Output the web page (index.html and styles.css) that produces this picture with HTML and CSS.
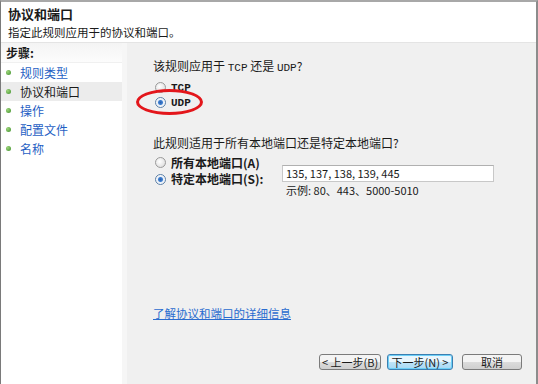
FILE: index.html
```html
<!doctype html>
<html>
  <head>
    <title>新建入站规则向导</title>
    <link rel="stylesheet" href="styles.css">
  </head>
  <body>
    <div id="wizard">
      <div id="head">
        <h1>协议和端口</h1>
        <p>指定此规则应用于的协议和端口。</p>
      </div>
      <div id="content">
        <div id="steps">
          <div class="steps-title">步骤:</div>
          <div class="step"><span class="dot"></span><a href="#">规则类型</a></div>
          <div class="step current"><span class="dot"></span>协议和端口</div>
          <div class="step"><span class="dot"></span><a href="#">操作</a></div>
          <div class="step"><span class="dot"></span><a href="#">配置文件</a></div>
          <div class="step"><span class="dot"></span><a href="#">名称</a></div>
        </div>
        <div id="main">
          <div class="question">该规则应用于 <span class="mono">TCP</span> 还是 <span class="mono">UDP</span>?</div>
          <div class="options">
            <div class="option"><span class="radio"></span><b class="mono">TCP</b></div>
            <div class="option marked"><span class="radio on"></span><b class="mono">UDP</b></div>
          </div>
          <div class="question second">此规则适用于所有本地端口还是特定本地端口?</div>
          <div class="options">
            <div class="option"><span class="radio"></span><b>所有本地端口(A)</b></div>
            <div class="option ports">
              <span class="radio on"></span><b class="port-label">特定本地端口(S):</b>
              <div class="port-field">
                <div class="port-input">135, 137, 138, 139, 445</div>
                <div class="example">示例: 80、443、5000-5010</div>
              </div>
            </div>
          </div>
          <div class="spacer"></div>
          <a href="#" class="more">了解协议和端口的详细信息</a>
          <div id="buttons">
            <div class="button">&lt; 上一步(B)</div>
            <div class="button default">下一步(N) &gt;</div>
            <div class="button cancel">取消</div>
          </div>
        </div>
      </div>
    </div>
  </body>
</html>
```

FILE: styles.css
```css
html, body {
  margin: 0;
  padding: 0;
}

body {
  font-family: "Noto Sans CJK SC", "Liberation Sans", sans-serif;
  font-size: 12px;
  color: #1a1a1a;
  background-color: #f0f0f0;
}

div#wizard {
  width: 535px;
  height: 382px;
  border-top: 2px solid #a8a8a8;
  border-left: 1px solid #7a7a7a;
  border-right: 2px solid #8c8c8c;
  display: flex;
  flex-direction: column;
}

div#head {
  background-color: #fff;
  height: 40px;
  padding-left: 7px;
  border-bottom: 1px solid #e4e4e4;
}

h1 {
  font-size: 13px;
  font-weight: bold;
  margin: 0;
  padding-top: 3px;
  line-height: 18px;
}

div#head p {
  margin: 0;
  padding-top: 1px;
  line-height: 16px;
  font-size: 11.5px;
}

div#content {
  flex: 1;
  display: flex;
}

div#steps {
  width: 121px;
  background-color: #fff;
  border-right: 5px solid #f6f6f6;
}

div.steps-title {
  font-weight: bold;
  height: 19px;
  line-height: 19px;
  padding-left: 5px;
  background: linear-gradient(#f4f4f4, #fcfcfc);
  border-bottom: 1px solid #f0f0f0;
}

div.step {
  height: 19px;
  line-height: 19px;
  display: flex;
  align-items: center;
}

div.step.current {
  background-color: #ececec;
}

span.dot {
  width: 5px;
  height: 5px;
  border-radius: 50%;
  background: radial-gradient(circle at 35% 35%, #9ed67a, #3c8d2a);
  margin-left: 5px;
  margin-right: 9px;
}

div.step a {
  color: #1f5fc4;
  text-decoration: none;
}

div#main {
  flex: 1;
  display: flex;
  flex-direction: column;
  padding: 15px 12px 14px 26px;
  position: relative;
}

.mono {
  font-family: "Liberation Mono", monospace;
  font-size: 11px;
}

div.question {
  line-height: 16px;
}

div.question.second {
  margin-top: 25px;
}

div.options {
  padding-left: 2px;
  margin-top: 4px;
}

div.option {
  display: flex;
  align-items: center;
  height: 15px;
  position: relative;
}

div.option b {
  margin-left: 5px;
}

div.option.marked::after {
  content: "";
  position: absolute;
  left: -19px;
  top: -6px;
  width: 61px;
  height: 20px;
  border: 3px solid #e3161b;
  border-radius: 50%;
}

div.option.ports {
  align-items: flex-start;
  margin-top: 1px;
}

span.radio {
  width: 9px;
  height: 9px;
  border-radius: 50%;
  border: 1px solid #9a9a9a;
  background: radial-gradient(circle at 40% 40%, #fff, #d6d6d6);
  flex: none;
}

div.ports span.radio {
  margin-top: 3px;
}

span.radio.on {
  border-color: #5b7fa6;
  background: radial-gradient(circle, #2a5fae 0, #3f7fd0 2px, #e8eef6 3px, #fff 5px);
}

b.port-label {
  width: 111px;
  line-height: 15px;
}

div.port-field {
  width: 212px;
}

div.port-input {
  background-color: #fff;
  border: 1px solid #c8c8c8;
  border-top-color: #b0b0b0;
  height: 15px;
  line-height: 15px;
  font-size: 11px;
  padding-left: 3px;
  margin-top: -6px;
}

div.example {
  padding-left: 4px;
  padding-top: 1px;
  line-height: 14px;
  font-size: 11px;
}

div.spacer {
  flex: 1;
}

a.more {
  color: #2a6ccf;
  text-decoration: underline;
  line-height: 16px;
  font-size: 11.5px;
}

div#buttons {
  display: flex;
  justify-content: flex-end;
  gap: 6px;
  margin-top: 33px;
  margin-right: 2px;
}

div.button {
  width: 60px;
  height: 14px;
  line-height: 14px;
  text-align: center;
  white-space: nowrap;
  font-size: 11px;
  border: 1px solid #7b7b7b;
  border-radius: 3px;
  background: linear-gradient(#f4f4f4 50%, #dcdcdc 50%, #cfcfcf);
}

div.button.default {
  border-color: #3c7fb1;
  background: linear-gradient(#e9f6fd 50%, #bfe4f7 50%, #a7d9f5);
  box-shadow: inset 0 0 0 1px #6ccff7;
  width: 64px;
  margin-right: 3px;
}

div.button.cancel {
  width: 58px;
}
```
